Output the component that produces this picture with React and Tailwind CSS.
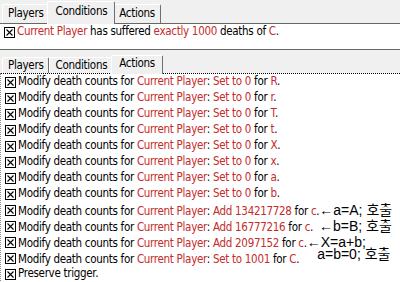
import React from 'react';

const red = 'text-[#c42b2b]';

const Check = () => (
  <svg width="11" height="11" viewBox="0 0 11 11" className="shrink-0">
    <rect x="0.5" y="0.5" width="10" height="10" fill="white" stroke="#000" />
    <path d="M2.5 2.5 L8.5 8.5 M8.5 2.5 L2.5 8.5" stroke="#000" strokeWidth="1.1" />
  </svg>
);

function Tabs({ active, tall }) {
  const tabs = ['Players', 'Conditions', 'Actions'];
  return (
    <div className={`flex items-end pl-[2px] ${tall ? 'h-[23px]' : 'h-[20px]'}`}>
      {tabs.map((t) =>
        t === active ? (
          <div
            key={t}
            className={`relative z-10 -mx-[2px] -mb-px flex items-center px-[7px] bg-[#f0f0f0] border-t border-l border-white border-r border-r-[#6f6f6f] rounded-t-[2px] ${tall ? 'h-[23px] pb-[3px]' : 'h-[19px] pb-[3px]'}`}
          >
            {t}
          </div>
        ) : (
          <div
            key={t}
            className={`flex items-center px-[5px] bg-[#f0f0f0] border-t border-l border-white border-r border-r-[#6f6f6f] rounded-t-[2px] ${tall ? 'h-[19px]' : 'h-[16px]'}`}
          >
            {t}
          </div>
        )
      )}
    </div>
  );
}

function Row({ children }) {
  return (
    <div className="flex items-center h-[16px] pl-[4px] whitespace-nowrap">
      <Check />
      <span className="ml-[2px]">{children}</span>
    </div>
  );
}

function Note({ children, className = '' }) {
  return (
    <span
      className={`text-[14px] tracking-normal text-black font-['Liberation_Sans','Noto_Sans_CJK_KR',sans-serif] ${className}`}
    >
      {children}
    </span>
  );
}

const setRows = ['R', 'r', 'T', 't', 'X', 'x', 'a', 'b'];

export default function App() {
  return (
    <div className="w-[400px] h-[282px] overflow-hidden bg-[#f0f0f0] text-[11.5px] tracking-[-0.3px] text-black font-['DejaVu_Sans_Condensed','DejaVu_Sans',sans-serif] font-stretch-condensed">
      <Tabs active="Conditions" tall />
      <div className="h-[27px] bg-white border-y border-[#646a62]">
        <Row>
          <span className={red}>Current Player</span> has suffered{' '}
          <span className={red}>exactly</span> <span className={red}>1000</span> deaths of{' '}
          <span className={red}>C</span>.
        </Row>
      </div>
      <div className="h-[3px]" />
      <Tabs active="Actions" />
      <div className="h-[212px] bg-white border-t border-dotted border-black border-l border-l-[#8a8a8a]">
        {setRows.map((u) => (
          <Row key={u}>
            Modify death counts for <span className={red}>Current Player</span>:{' '}
            <span className={red}>Set to 0</span> for <span className={red}>{u}</span>.
          </Row>
        ))}
        <Row>
          Modify death counts for <span className={red}>Current Player</span>:{' '}
          <span className={red}>Add 134217728</span> for <span className={red}>c</span>.
          <Note>←a=A; 호출</Note>
        </Row>
        <Row>
          Modify death counts for <span className={red}>Current Player</span>:{' '}
          <span className={red}>Add 16777216</span> for <span className={red}>c</span>.
          <Note className="ml-[6px]">←b=B; 호출</Note>
        </Row>
        <Row>
          Modify death counts for <span className={red}>Current Player</span>:{' '}
          <span className={red}>Add 2097152</span> for <span className={red}>c</span>.
          <Note>←X=a+b;</Note>
        </Row>
        <Row>
          Modify death counts for <span className={red}>Current Player</span>:{' '}
          <span className={red}>Set to 1001</span> for <span className={red}>C</span>.
          <Note className="relative -top-[4px] ml-[18px]">a=b=0; 호출</Note>
        </Row>
        <Row>Preserve trigger.</Row>
      </div>
    </div>
  );
}
